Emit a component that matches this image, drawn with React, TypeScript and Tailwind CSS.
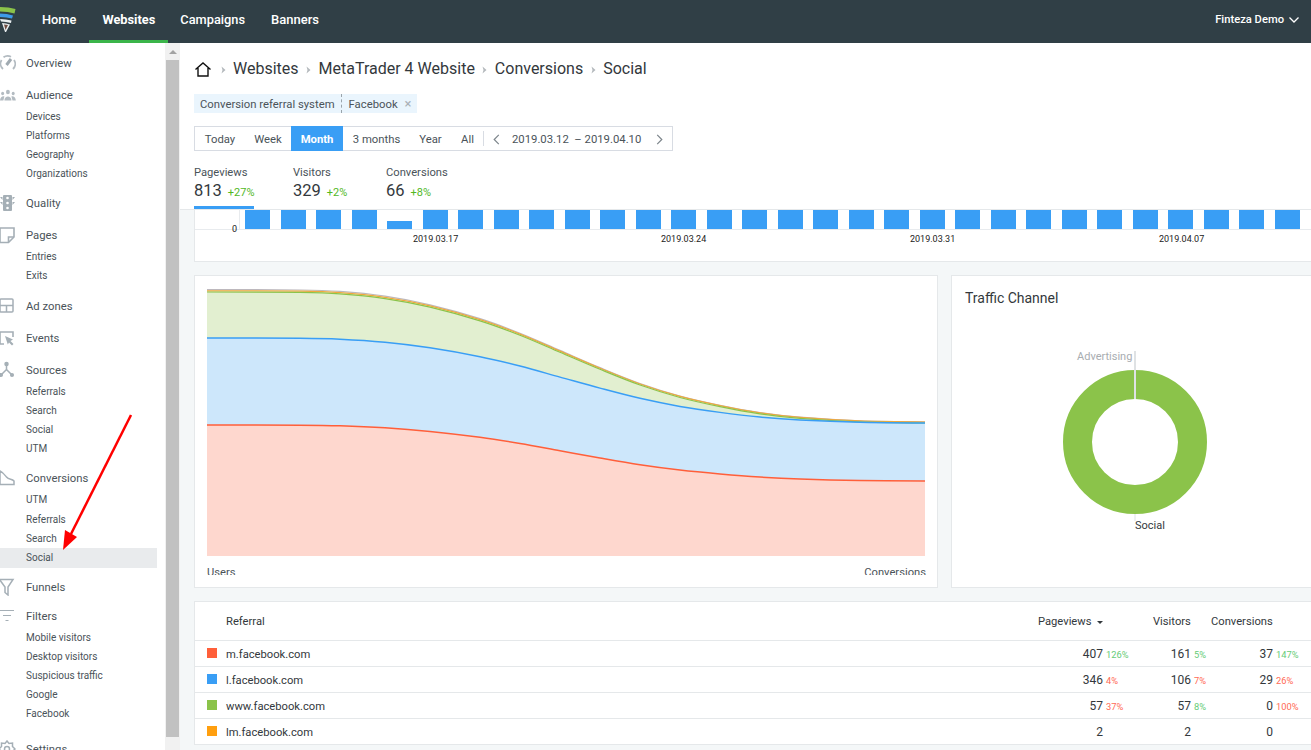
import React from 'react'

const font = { fontFamily: 'Roboto, sans-serif' }

const IconOverview = () => (
    <svg viewBox="0 0 18 18" className="w-[18px] h-[18px]" fill="none" stroke="#b3bbc1" strokeWidth="1.8">
        <path d="M5 15 A7 7 0 0 1 3.6 6 M5.5 3.3 A7 7 0 0 1 13 2.8 M16 6 A7 7 0 0 1 15 15" />
        <path d="M8.5 11 L13 5" strokeWidth="3" stroke="#a0aab1" />
    </svg>
)
const IconAudience = () => (
    <svg viewBox="0 0 18 18" className="w-[18px] h-[18px]" fill="#b3bbc1">
        <g transform="translate(2 1.5) scale(.88 1)">
            <circle cx="9" cy="4.5" r="2.2" />
            <circle cx="3" cy="6" r="1.7" />
            <circle cx="15" cy="6" r="1.7" />
            <path d="M5 13 C5 7.5 13 7.5 13 13 Z" />
            <path d="M0 13 C0 9 4 8 5 9 L3.8 13 Z M18 13 C18 9 14 8 13 9 L14.2 13 Z" />
        </g>
    </svg>
)
const IconQuality = () => (
    <svg viewBox="0 0 18 18" className="w-[18px] h-[18px]" fill="#a5afb6">
        <rect x="5" y="1" width="9" height="16" rx="1" />
        <path d="M2 3 H4.5 V6 Z M17 3 H14.5 V6 Z M2 8 H4.5 V11 Z M17 8 H14.5 V11 Z" />
        <circle cx="9.5" cy="4" r="1.3" fill="#fff" />
        <circle cx="9.5" cy="9" r="1.3" fill="#fff" />
        <circle cx="9.5" cy="14" r="1.3" fill="#fff" />
    </svg>
)
const IconPages = () => (
    <svg viewBox="0 0 18 18" className="w-[18px] h-[18px]" fill="none" stroke="#a5afb6" strokeWidth="1.6">
        <path d="M2 2 H16 V11 L10.5 16.5 H2 Z" />
        <path d="M10.5 16 V11 H16" />
    </svg>
)
const IconAdZones = () => (
    <svg viewBox="0 0 18 18" className="w-[18px] h-[18px]" fill="none" stroke="#a5afb6" strokeWidth="1.5">
        <rect x="2" y="2" width="13" height="13" rx="1" />
        <path d="M2 8.5 H15 M8.5 8.5 V15" />
    </svg>
)
const IconEvents = () => (
    <svg viewBox="0 0 18 18" className="w-[18px] h-[18px]">
        <path d="M6 15 H2 V3 H15 V8" fill="none" stroke="#a5afb6" strokeWidth="1.6" />
        <path d="M7 7 L15 10.5 L12.5 12 L15.5 15 L14 16.5 L11 13.5 L9.8 15.5 Z" fill="#a5afb6" />
    </svg>
)
const IconSources = () => (
    <svg viewBox="0 0 18 18" className="w-[18px] h-[18px]" stroke="#a5afb6" strokeWidth="1.5" fill="#a5afb6">
        <path d="M8.5 8.5 V3 M8.5 8.5 L3 14 M8.5 8.5 L14 14" fill="none" />
        <circle cx="8.5" cy="3" r="1.5" />
        <circle cx="3" cy="14" r="1.3" />
        <circle cx="14" cy="14" r="1.3" />
    </svg>
)
const IconConversions = () => (
    <svg viewBox="0 0 18 18" className="w-[18px] h-[18px]" fill="none" stroke="#a5afb6" strokeWidth="1.5">
        <path d="M2 2 V15.5 H16 V12 C14 9.5 11 11 8.5 8 C6.5 5.5 5 3.5 2 2 Z" />
    </svg>
)
const IconFunnels = () => (
    <svg viewBox="0 0 18 18" className="w-[18px] h-[18px]" fill="none" stroke="#a5afb6" strokeWidth="1.5">
        <path d="M1.5 1.5 H15 L10 9 V17 L7 14.5 V9 Z" />
    </svg>
)
const IconFilters = () => (
    <svg viewBox="0 0 18 18" className="w-[18px] h-[18px]" fill="none" stroke="#a5afb6" strokeWidth="1.2">
        <path d="M2 3.5 H16 M5 8.5 H13 M7.5 13.5 H10.5" />
    </svg>
)
const IconSettings = () => (
    <svg viewBox="0 0 18 18" className="w-[18px] h-[18px]" fill="none" stroke="#a5afb6" strokeWidth="1.5">
        <path d="M9 1 L11 3.5 L14.5 3 L14.5 6.5 L17 9 L14.5 11.5 L14.5 15 L11 14.5 L9 17 L7 14.5 L3.5 15 L3.5 11.5 L1 9 L3.5 6.5 L3.5 3 L7 3.5 Z" />
        <circle cx="9" cy="9" r="2.5" />
    </svg>
)

const groups = [
    { name: 'Overview', icon: <IconOverview />, mt: 'mt-[10px]', items: [] },
    { name: 'Audience', icon: <IconAudience />, mt: 'mt-[12px]', items: ['Devices', 'Platforms', 'Geography', 'Organizations'] },
    { name: 'Quality', icon: <IconQuality />, mt: 'mt-[10px]', items: [] },
    { name: 'Pages', icon: <IconPages />, mt: 'mt-[12px]', items: ['Entries', 'Exits'] },
    { name: 'Ad zones', icon: <IconAdZones />, mt: 'mt-[11px]', items: [] },
    { name: 'Events', icon: <IconEvents />, mt: 'mt-[12px]', items: [] },
    { name: 'Sources', icon: <IconSources />, mt: 'mt-[12px]', items: ['Referrals', 'Search', 'Social', 'UTM'] },
    { name: 'Conversions', icon: <IconConversions />, mt: 'mt-[10px]', items: ['UTM', 'Referrals', 'Search', 'Social'] },
    { name: 'Funnels', icon: <IconFunnels />, mt: 'mt-[9px]', items: [] },
    { name: 'Filters', icon: <IconFilters />, mt: 'mt-[9px]', items: ['Mobile visitors', 'Desktop visitors', 'Suspicious traffic', 'Google', 'Facebook'] },
    { name: 'Settings', icon: <IconSettings />, mt: 'mt-[16px]', items: [] },
]

const Sidebar = () => (
    <div className="w-[165px] shrink-0 h-full bg-white overflow-hidden">
        {groups.map((g) => (
            <div key={g.name} className={g.mt}>
                <div className="h-[20px] flex items-center text-[11.3px] text-[#4a5359] -ml-[2px]">
                    <span className="w-[28px] shrink-0">{g.icon}</span>
                    <span className="pt-[2px]">{g.name}</span>
                </div>
                {g.items.length > 0 && (
                    <div className="pt-[2px]">
                        {g.items.map((item, i) => {
                            const conv = g.name === 'Conversions'
                            return (
                                <div
                                    key={item}
                                    className={`w-[157px] pl-[26px] flex items-center text-[10px] text-[#4a5359] ${
                                        conv && (i === 0 || i === 3) ? 'h-[20px] pb-[1px]' : 'h-[19px]'
                                    } ${conv && i === 3 ? 'bg-[#e9ebed]' : ''}`}
                                >
                                    {item}
                                </div>
                            )
                        })}
                    </div>
                )}
            </div>
        ))}
    </div>
)

const Scrollbar = () => (
    <div className="w-[15px] shrink-0 h-full bg-[#f1f1f1] flex flex-col items-center">
        <div className="h-[17px] w-full flex items-center justify-center">
            <div className="w-0 h-0 border-x-[4px] border-x-transparent border-b-[4px] border-b-[#a3a3a3]" />
        </div>
        <div className="w-[13px] h-[677px] bg-[#c1c1c1]" />
    </div>
)

const Header = () => (
    <div className="h-[43px] bg-[#303f46] flex items-center text-white shrink-0 relative">
        <svg viewBox="0 0 17 26" className="w-[17px] h-[26px] absolute left-0 top-[6px]">
            <path d="M0 1 Q9 1 15.5 3 L14.5 7.5 Q8 5.5 0 5.5 Z" fill="#8bc34a" />
            <path d="M0 7.5 Q7 7.5 13 9.5 L12 12.5 Q7 11 0 11 Z" fill="#3d9be9" />
            <path d="M0 13 Q6 13 11.5 14.5 L11 17 Q6 15.5 1 15.5 Z" fill="#e9eef0" />
            <path d="M2 17 Q6 17 10 18.5 L6 26 H5 Z" fill="#e9eef0" />
            <path d="M4 18.5 L8 19 L5.5 24 Z" fill="#6d4c41" />
        </svg>
        <div className="flex h-full text-[12.8px] font-medium ml-[29px]">
            <div className="pl-[13px] pr-[13px] pb-[3px] h-full flex items-center">Home</div>
            <div className="w-[79px] justify-center h-full flex items-center font-bold border-b-[3px] border-[#3bb54a]">Websites</div>
            <div className="pl-[12px] pr-[13px] pb-[3px] h-full flex items-center">Campaigns</div>
            <div className="px-[13px] pb-[3px] h-full flex items-center text-[13px]">Banners</div>
        </div>
        <div className="ml-auto flex items-center gap-[5px] pr-[12px] pb-[3px] text-[11.2px] font-medium">
            <span>Finteza Demo</span>
            <svg viewBox="0 0 10 6" className="w-[10px] h-[6px]" fill="none" stroke="#fff" strokeWidth="1.3">
                <path d="M0.5 0.5 L5 5 L9.5 0.5" />
            </svg>
        </div>
    </div>
)

const Sep = () => (
    <svg viewBox="0 0 5 8" className="w-[5px] h-[8px] mx-[7.5px] mt-[2px]" fill="#b4b9bd">
        <path d="M0.5 0.5 L4.5 4 L0.5 7.5 L1.5 4 Z" />
    </svg>
)

const Breadcrumbs = () => (
    <div className="h-[26px] flex items-center text-[16px] text-[#33383c]">
        <svg viewBox="0 0 16 15" className="w-[16px] h-[15px] ml-[1px] mr-[2px]" fill="none" stroke="#111" strokeWidth="1.4">
            <path d="M0.5 7.5 L8 1 L15.5 7.5 M3 6 V14 H13 V6" />
        </svg>
        <Sep />
        <span>Websites</span>
        <Sep />
        <span>MetaTrader 4 Website</span>
        <Sep />
        <span>Conversions</span>
        <Sep />
        <span>Social</span>
    </div>
)

const ranges = [
    { label: 'Today', w: 'w-[50px]' },
    { label: 'Week', w: 'w-[46px]' },
    { label: 'Month', w: 'w-[52px]' },
    { label: '3 months', w: 'w-[67px]' },
    { label: 'Year', w: 'w-[41px]' },
    { label: 'All', w: 'w-[33px]' },
]

const RangeBar = () => (
    <div className="mt-[13px] h-[25px] w-[479px] border border-[#d8dce3] flex items-center text-[11.3px] text-[#4a5359]">
        {ranges.map((r) => (
            <div
                key={r.label}
                className={`${r.w} h-[25px] pt-[3px] flex items-center justify-center ${
                    r.label === 'Month' ? 'bg-[#399ef5] text-white font-bold' : ''
                }`}
            >
                {r.label}
            </div>
        ))}
        <div className="h-[15px] border-l border-[#d8dce3] ml-[-1px]" />
        <svg viewBox="0 0 7 12" className="w-[7px] h-[11px] ml-[9px] mt-[2px]" fill="none" stroke="#7d858b" strokeWidth="1.3">
            <path d="M6 1 L1 6 L6 11" />
        </svg>
        <span className="ml-[12px] w-[130px] pt-[3px] whitespace-nowrap">2019.03.12&nbsp;&nbsp;– 2019.04.10</span>
        <svg viewBox="0 0 7 12" className="w-[7px] h-[11px] ml-[14px] mt-[2px]" fill="none" stroke="#7d858b" strokeWidth="1.3">
            <path d="M1 1 L6 6 L1 11" />
        </svg>
    </div>
)

const metrics = [
    { label: 'Pageviews', value: '813', delta: '+27%', w: 'w-[99px]', on: true },
    { label: 'Visitors', value: '329', delta: '+2%', w: 'w-[93px]', on: false },
    { label: 'Conversions', value: '66', delta: '+8%', w: 'w-[90px]', on: false },
]

const Metrics = () => (
    <div className="mt-[15px] h-[43px] flex">
        {metrics.map((m) => (
            <div key={m.label} className={m.w}>
                <div className="text-[11.2px] leading-[14px] text-[#4a5359]">{m.label}</div>
                <div className="flex items-baseline h-[22px] leading-[22px]">
                    <span className="text-[16.5px] text-[#33383c]">{m.value}</span>
                    <span className="text-[11px] text-[#52b81f] ml-[6px]">{m.delta}</span>
                </div>
                {m.on && <div className="w-[60px] h-[3px] bg-[#399ef5] mt-[4px]" />}
            </div>
        ))}
    </div>
)

const bars = Array.from({ length: 30 }, (_, i) => i)
const dates = [
    { label: '2019.03.17', ml: 'ml-[218px]' },
    { label: '2019.03.24', ml: 'ml-[199px]' },
    { label: '2019.03.31', ml: 'ml-[200px]' },
    { label: '2019.04.07', ml: 'ml-[200px]' },
]

const BarChart = () => (
    <div className="h-[52px] ml-[14px] bg-white border-b border-l border-[#e5e8ea]">
        <div className="flex h-[20px] items-end border-b border-[#e8ebee]">
            <span className="w-[42px] text-right text-[9px] leading-[10px] text-[#222] -mb-[5px]">0</span>
            <div className="w-px h-[20px] bg-[#e8ebee] ml-[2px]" />
            <div className="flex ml-[5px] h-[19px] items-end gap-[10.5px]">
                {bars.map((i) => (
                    <div key={i} className={`w-[25px] bg-[#399ef5] ${i === 4 ? 'h-[8px]' : 'h-[19px]'}`} />
                ))}
            </div>
        </div>
        <div className="flex text-[9px] text-[#222] mt-[4px] leading-[10px]">
            {dates.map((d) => (
                <span key={d.label} className={`${d.ml} w-[49px] whitespace-nowrap`}>{d.label}</span>
            ))}
        </div>
    </div>
)

// share of the drop at each x, read off the reference
const shape: [number, number][] = [
    [207, 0], [300, 0.003], [340, 0.014], [385, 0.05], [430, 0.115], [480, 0.22], [520, 0.33], [560, 0.46], [600, 0.59],
    [640, 0.71], [680, 0.805], [720, 0.875], [760, 0.93], [800, 0.965], [860, 0.992], [925, 1],
]

const curve = (y0: number, y1: number) => {
    const pts = shape.map(([x, f]) => [x, y0 + (y1 - y0) * f])
    let d = `M${pts[0][0]} ${pts[0][1]}`
    for (let i = 0; i < pts.length - 1; i++) {
        const p0 = pts[Math.max(i - 1, 0)]
        const p1 = pts[i]
        const p2 = pts[i + 1]
        const p3 = pts[Math.min(i + 2, pts.length - 1)]
        const c1 = [p1[0] + (p2[0] - p0[0]) / 6, p1[1] + (p2[1] - p0[1]) / 6]
        const c2 = [p2[0] - (p3[0] - p1[0]) / 6, p2[1] - (p3[1] - p1[1]) / 6]
        d += ` C${c1[0]} ${c1[1]} ${c2[0]} ${c2[1]} ${p2[0]} ${p2[1]}`
    }
    return d
}
const area = (y0: number, y1: number) => `${curve(y0, y1)} L925 556 L207 556 Z`

const FlowChart = () => (
    <div className="w-[744px] h-[313px] shrink-0 bg-white border border-[#e5e8ea] pl-[12px] pt-[13px]">
        <svg viewBox="207 289 719 267" className="w-[719px] h-[267px] block">
            <path d={area(292, 423)} fill="#e2efd0" />
            <path d={area(338, 423)} fill="#cde7fb" />
            <path d={area(425, 481)} fill="#fed7ce" />
            <path d={curve(289.6, 421.8)} fill="none" stroke="#bdb8bd" strokeWidth="1.2" />
            <path d={curve(290.8, 422)} fill="none" stroke="#f0a83c" strokeWidth="1.2" />
            <path d={curve(292, 423)} fill="none" stroke="#8bc34a" strokeWidth="1.2" />
            <path d={curve(338, 423)} fill="none" stroke="#399ef5" strokeWidth="1.5" />
            <path d={curve(425, 481)} fill="none" stroke="#ff5f3a" strokeWidth="1.5" />
        </svg>
        <div className="h-[19px] pr-[11px] pt-[10px] overflow-hidden flex justify-between text-[11.2px] leading-[14px] text-[#4a5359]">
            <span>Users</span>
            <span>Conversions</span>
        </div>
    </div>
)

const Donut = () => (
    <div className="flex-1 h-[313px] bg-white border border-r-0 border-[#e5e8ea] relative">
        <div className="pl-[13px] pt-[13px] text-[14px] leading-[18px] text-[#33383c]">Traffic Channel</div>
        <svg viewBox="0 0 360 313" className="w-[360px] h-[313px] absolute left-0 top-0">
            <circle cx="183" cy="166" r="57.5" fill="none" stroke="#8bc34a" strokeWidth="29" />
            <path d="M183 75 V123" stroke="#dfe2e4" strokeWidth="2" />
            <path d="M183 238 V245" stroke="#dfe2e4" strokeWidth="1" />
        </svg>
        <span className="absolute left-[125px] top-[74px] text-[11px] leading-[14px] text-[#a8adb1]">Advertising</span>
        <span className="absolute left-[183px] top-[243px] text-[11px] leading-[14px] text-[#33383c]">Social</span>
    </div>
)

const rows = [
    { color: 'bg-[#ff5f3a]', name: 'm.facebook.com', a: '407', ap: '126%', ag: true, b: '161', bp: '5%', bg: true, c: '37', cp: '147%', cg: true },
    { color: 'bg-[#399ef5]', name: 'l.facebook.com', a: '346', ap: '4%', ag: false, b: '106', bp: '7%', bg: false, c: '29', cp: '26%', cg: false },
    { color: 'bg-[#8bc34a]', name: 'www.facebook.com', a: '57', ap: '37%', ag: false, b: '57', bp: '8%', bg: true, c: '0', cp: '100%', cg: false },
    { color: 'bg-[#ff9f0f]', name: 'lm.facebook.com', a: '2', ap: '', ag: false, b: '2', bp: '', bg: false, c: '0', cp: '', cg: false },
]

const Pct = ({ v, up, w }: { v: string; up: boolean; w: string }) => (
    <span className={`${w} pl-[3px] pt-[2px] text-[9.3px] ${up ? 'text-[#66cc77]' : 'text-[#ff6a55]'}`}>{v}</span>
)

const Table = () => (
    <div className="mt-[13px] bg-white border-t border-l border-[#e5e8ea]">
        <div className="h-[39px] pt-[2px] flex items-center text-[11.2px] text-[#33383c] border-b border-[#e5e8ea]">
            <span className="ml-[31px] flex-1">Referral</span>
            <span className="w-[54px]">Pageviews</span>
            <span className="w-0 h-0 ml-[5px] border-x-[3px] border-x-transparent border-t-[3px] border-t-[#33383c]" />
            <span className="ml-[50px] w-[58px]">Visitors</span>
            <span className="w-[100px]">Conversions</span>
        </div>
        {rows.map((r) => (
            <div key={r.name} className="h-[26px] flex items-center border-b border-[#e5e8ea] text-[11.2px] text-[#33383c] pt-[1px]">
                <span className={`w-[10px] h-[10px] ml-[12px] -mt-[3px] ${r.color}`} />
                <span className="ml-[9px] flex-1 pt-[2px]">{r.name}</span>
                <span className="w-[40px] text-right text-[12px]">{r.a}</span>
                <Pct v={r.ap} up={r.ag} w="w-[39px]" />
                <span className="w-[49px] text-right text-[12px]">{r.b}</span>
                <Pct v={r.bp} up={r.bg} w="w-[33px]" />
                <span className="w-[49px] text-right text-[12px]">{r.c}</span>
                <Pct v={r.cp} up={r.cg} w="w-[38px]" />
            </div>
        ))}
    </div>
)

const App: React.FC = () => {
    return (
        <div className="h-[750px] w-[1311px] flex flex-col overflow-hidden relative" style={font}>
            <Header />
            <div className="flex flex-1 min-h-0">
                <Sidebar />
                <Scrollbar />
                <div className="flex-1 min-w-0 bg-[#f4f7f8] overflow-hidden">
                    <div className="bg-white h-[167px] pl-[14px] pt-[13px] border-b border-[#e5e8ea]">
                        <Breadcrumbs />
                        <div className="mt-[12px] inline-flex h-[19px] items-center bg-[#eaf5fd] text-[11.3px] text-[#4a5359] align-top">
                            <span className="pl-[6px] pr-[6px] pt-[3px]">Conversion referral system</span>
                            <span className="h-[19px] border-l border-dashed border-[#9aa4ab]" />
                            <span className="pl-[7px] pt-[3px]">Facebook</span>
                            <span className="ml-[7px] mr-[5px] text-[#a8b0b6] text-[13px] leading-[19px]">×</span>
                        </div>
                        <RangeBar />
                        <Metrics />
                    </div>
                    <BarChart />
                    <div className="pl-[14px] mt-[13px]">
                        <div className="flex gap-[13px]">
                            <FlowChart />
                            <Donut />
                        </div>
                        <Table />
                    </div>
                </div>
            </div>
            <svg viewBox="0 0 1311 750" className="absolute inset-0 w-[1311px] h-[750px] pointer-events-none">
                <path d="M131 415 L71 534" stroke="#ff0000" strokeWidth="2.5" fill="none" />
                <path d="M63 550 L65 530 L77 537 Z" fill="#ff0000" />
            </svg>
        </div>
    )
}

export default App
